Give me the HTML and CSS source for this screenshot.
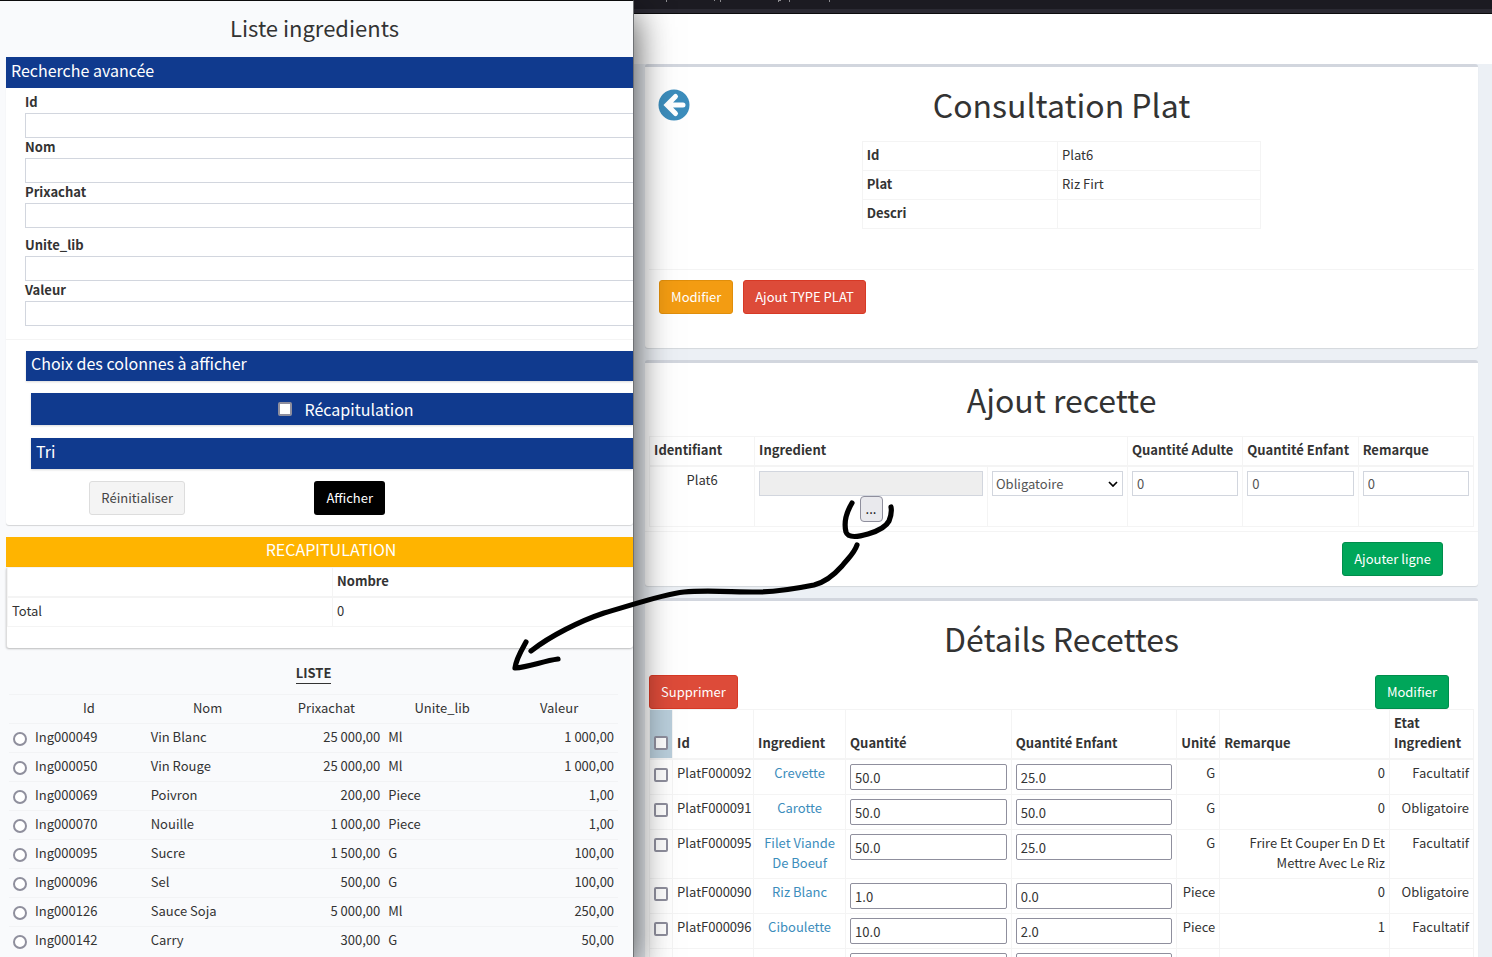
FILE: index.html
```html
<!DOCTYPE html>
<html lang="fr">
<head>
<meta charset="utf-8">
<title>Consultation Plat</title>
<link rel="stylesheet" href="styles.css">
</head>
<body>
<div class="desktop">
  <aside class="popup">
    <h2 class="popup-title">Liste ingredients</h2>
    <form class="search-box">
      <h3 class="bar">Recherche avancée</h3>
      <div class="search-fields">
        <label for="f-id">Id</label><input id="f-id" class="field" type="text">
        <label for="f-nom">Nom</label><input id="f-nom" class="field" type="text">
        <label for="f-prix">Prixachat</label><input id="f-prix" class="field" type="text">
        <label class="spaced" for="f-unite">Unite_lib</label><input id="f-unite" class="field" type="text">
        <label for="f-valeur">Valeur</label><input id="f-valeur" class="field" type="text">
      </div>
      <div class="search-options">
        <h3 class="bar bar-slim bar-shadow">Choix des colonnes à afficher</h3>
        <div class="sub-options">
          <div class="bar bar-recap bar-shadow"><input id="recap" type="checkbox" class="tick"><label for="recap">Récapitulation</label></div>
          <h3 class="bar bar-shadow">Tri</h3>
        </div>
        <div class="search-actions">
          <div class="action-cell"><button type="reset" class="btn btn-default">Réinitialiser</button></div>
          <div class="action-cell"><button type="button" class="btn btn-black">Afficher</button></div>
          <div></div>
        </div>
      </div>
    </form>
    <section class="recap-box">
      <h3 class="bar bar-slim bar-amber">RECAPITULATION</h3>
      <div class="recap-body">
        <table class="grid recap-table">
          <thead><tr><th></th><th>Nombre</th></tr></thead>
          <tbody><tr><td>Total</td><td>0</td></tr></tbody>
        </table>
      </div>
    </section>
    <section class="liste">
      <h4 class="liste-title"><span>LISTE</span></h4>
      <table class="liste-table">
        <colgroup><col class="c-radio"><col class="c-id"><col class="c-nom"><col class="c-prix"><col class="c-unite"><col class="c-valeur"></colgroup>
        <thead><tr><th></th><th>Id</th><th>Nom</th><th>Prixachat</th><th>Unite_lib</th><th>Valeur</th></tr></thead>
        <tbody>
          <tr><td><input type="radio" name="ing" aria-label="Ing000049"></td><td>Ing000049</td><td>Vin Blanc</td><td class="num">25 000,00</td><td>Ml</td><td class="num">1 000,00</td></tr>
          <tr><td><input type="radio" name="ing" aria-label="Ing000050"></td><td>Ing000050</td><td>Vin Rouge</td><td class="num">25 000,00</td><td>Ml</td><td class="num">1 000,00</td></tr>
          <tr><td><input type="radio" name="ing" aria-label="Ing000069"></td><td>Ing000069</td><td>Poivron</td><td class="num">200,00</td><td>Piece</td><td class="num">1,00</td></tr>
          <tr><td><input type="radio" name="ing" aria-label="Ing000070"></td><td>Ing000070</td><td>Nouille</td><td class="num">1 000,00</td><td>Piece</td><td class="num">1,00</td></tr>
          <tr><td><input type="radio" name="ing" aria-label="Ing000095"></td><td>Ing000095</td><td>Sucre</td><td class="num">1 500,00</td><td>G</td><td class="num">100,00</td></tr>
          <tr><td><input type="radio" name="ing" aria-label="Ing000096"></td><td>Ing000096</td><td>Sel</td><td class="num">500,00</td><td>G</td><td class="num">100,00</td></tr>
          <tr><td><input type="radio" name="ing" aria-label="Ing000126"></td><td>Ing000126</td><td>Sauce Soja</td><td class="num">5 000,00</td><td>Ml</td><td class="num">250,00</td></tr>
          <tr><td><input type="radio" name="ing" aria-label="Ing000142"></td><td>Ing000142</td><td>Carry</td><td class="num">300,00</td><td>G</td><td class="num">50,00</td></tr>
        </tbody>
      </table>
    </section>
  </aside>

  <div class="main-window">
    <div class="browser-bar">
      <svg width="240" height="3" viewBox="0 0 240 3" fill="#8b8b8f" aria-hidden="true"><path d="M32 0h1v2h-1zM80 0h1v1h-1zM86 0h1v2h-1zM144 0h3v1h-2v1h-1zM155 0h1v2h-1zM195 0h1v2h-1z"/></svg>
    </div>
    <header class="top-nav"></header>
    <main class="content">
      <section class="card">
        <div class="card-head">
          <a class="back" href="#" aria-label="Retour">
            <svg viewBox="0 0 32 32" aria-hidden="true"><circle cx="16" cy="16" r="15.5" fill="#3c8dbc"/><path d="M17.5 7.5 L9 16 L17.5 24.500 M9.500 16 H25" fill="none" stroke="#fff" stroke-width="5" stroke-linecap="round" stroke-linejoin="miter"/></svg>
          </a>
          <h1>Consultation Plat</h1>
        </div>
        <table class="grid plat-table">
          <tbody>
            <tr><th scope="row">Id</th><td>Plat6</td></tr>
            <tr><th scope="row">Plat</th><td>Riz Firt</td></tr>
            <tr><th scope="row">Descri</th><td></td></tr>
          </tbody>
        </table>
        <div class="card-actions">
          <button type="button" class="btn btn-warning">Modifier</button>
          <button type="button" class="btn btn-danger">Ajout TYPE PLAT</button>
        </div>
      </section>

      <form class="card card-add">
        <h1>Ajout recette</h1>
        <div class="table-wrap">
          <table class="grid add-table">
            <colgroup><col class="a-id"><col class="a-ing"><col class="a-etat"><col class="a-qte"><col class="a-qte"><col class="a-qte"></colgroup>
            <thead><tr><th>Identifiant</th><th colspan="2">Ingredient</th><th>Quantité Adulte</th><th>Quantité Enfant</th><th>Remarque</th></tr></thead>
            <tbody><tr>
              <td class="center">Plat6</td>
              <td class="center"><input class="field" type="text" aria-label="Ingredient" readonly><button type="button" class="picker">...</button></td>
              <td><select class="field" aria-label="Etat"><option>Obligatoire</option><option>Facultatif</option></select></td>
              <td><input class="field" type="text" value="0" aria-label="Quantité Adulte"></td>
              <td><input class="field" type="text" value="0" aria-label="Quantité Enfant"></td>
              <td><input class="field" type="text" value="0" aria-label="Remarque"></td>
            </tr></tbody>
          </table>
        </div>
        <div class="add-actions"><button type="button" class="btn btn-success">Ajouter ligne</button></div>
      </form>

      <form class="card">
        <h1>Détails Recettes</h1>
        <div class="table-wrap">
          <div class="detail-actions">
            <button type="button" class="btn btn-danger">Supprimer</button>
            <button type="button" class="btn btn-success">Modifier</button>
          </div>
          <table class="grid detail-table">
            <colgroup><col class="d-tick"><col class="d-id"><col class="d-ing"><col class="d-qte"><col class="d-qte"><col class="d-unite"><col class="d-rem"><col class="d-etat"></colgroup>
            <thead><tr><th class="all"><input type="checkbox" class="tick" aria-label="Tout"></th><th>Id</th><th>Ingredient</th><th>Quantité</th><th>Quantité Enfant</th><th>Unité</th><th>Remarque</th><th>Etat Ingredient</th></tr></thead>
            <tbody>
              <tr><td><input type="checkbox" class="tick" aria-label="PlatF000092"></td><td>PlatF000092</td><td class="center"><a href="#">Crevette</a></td><td><input class="qty" type="text" value="50.0" aria-label="Quantité"></td><td><input class="qty" type="text" value="25.0" aria-label="Quantité Enfant"></td><td class="num">G</td><td class="num">0</td><td class="num">Facultatif</td></tr>
              <tr><td><input type="checkbox" class="tick" aria-label="PlatF000091"></td><td>PlatF000091</td><td class="center"><a href="#">Carotte</a></td><td><input class="qty" type="text" value="50.0" aria-label="Quantité"></td><td><input class="qty" type="text" value="50.0" aria-label="Quantité Enfant"></td><td class="num">G</td><td class="num">0</td><td class="num">Obligatoire</td></tr>
              <tr><td><input type="checkbox" class="tick" aria-label="PlatF000095"></td><td>PlatF000095</td><td class="center"><a href="#">Filet Viande De Boeuf</a></td><td><input class="qty" type="text" value="50.0" aria-label="Quantité"></td><td><input class="qty" type="text" value="25.0" aria-label="Quantité Enfant"></td><td class="num">G</td><td class="num">Frire Et Couper En D Et Mettre Avec Le Riz</td><td class="num">Facultatif</td></tr>
              <tr><td><input type="checkbox" class="tick" aria-label="PlatF000090"></td><td>PlatF000090</td><td class="center"><a href="#">Riz Blanc</a></td><td><input class="qty" type="text" value="1.0" aria-label="Quantité"></td><td><input class="qty" type="text" value="0.0" aria-label="Quantité Enfant"></td><td class="num">Piece</td><td class="num">0</td><td class="num">Obligatoire</td></tr>
              <tr><td><input type="checkbox" class="tick" aria-label="PlatF000096"></td><td>PlatF000096</td><td class="center"><a href="#">Ciboulette</a></td><td><input class="qty" type="text" value="10.0" aria-label="Quantité"></td><td><input class="qty" type="text" value="2.0" aria-label="Quantité Enfant"></td><td class="num">Piece</td><td class="num">1</td><td class="num">Facultatif</td></tr>
              <tr><td></td><td></td><td></td><td><input class="qty" type="text" aria-label="Quantité"></td><td><input class="qty" type="text" aria-label="Quantité Enfant"></td><td></td><td></td><td></td></tr>
            </tbody>
          </table>
        </div>
      </form>
    </main>
  </div>

  <svg class="annotation" width="400" height="190" viewBox="505 490 400 190" fill="none" stroke="#000" stroke-width="5.2" stroke-linecap="round" stroke-linejoin="round" aria-hidden="true">
    <path d="M852 503 C846 513 844 524 846 532 C848 538 858 537 868 534 C878 531 886 527 889 521 C891 516 892 512 891 507"/>
    <path d="M857 545 C854 554 848 558 842 566 C834 575 826 582 814 585 C794 589 777 592 757 592 C732 592 705 590 684 592 C664 594 632 605 604 613 C580 621 550 636 531 651"/>
    <path d="M526 642 C521 651 516 659 515 668 C529 667 543 661 558 659"/>
  </svg>
</div>
</body>
</html>
```
FILE: styles.css
```css
*, *::before, *::after { box-sizing: border-box; }

body {
  margin: 0;
  font: 13px/20px "Noto Sans CJK JP", "Source Sans Pro", "Noto Sans", sans-serif;
  color: #333;
}

h1, h2, h3, h4 { margin: 0; font-weight: 400; }
input, select, button { font: inherit; color: inherit; margin: 0; }
table { border-collapse: collapse; width: 100%; table-layout: fixed; }
th { text-align: left; font-weight: 700; }
a { color: #3c8dbc; text-decoration: none; }

.desktop {
  position: relative;
  display: flex;
  height: 100vh;
  overflow: hidden;
  background: #ecf0f5;
}

/* Left window */
.popup {
  position: relative;
  z-index: 1;
  flex: 0 0 42.5%;
  overflow: hidden;
  background: #f9fafc;
  border-top: 1px solid #0c0c0d;
  border-right: 1px solid #6f7174;
  box-shadow: 0 14px 36px rgba(0, 0, 0, .75);
  padding-left: 6px;
}
.popup-title { padding: 14px 10px 18px 0; font-size: 22px; line-height: 24px; text-align: center; }

.bar {
  background: #103a8e;
  color: #fff;
  padding: 1px 5px 6px;
  font-size: 16px;
  line-height: 24px;
}
.bar-slim { padding-top: 0; }
.bar-shadow { box-shadow: 0 1px 2px rgba(0, 0, 0, .15); }
.search-box {
  background: #fff;
  border-radius: 3px;
  box-shadow: 0 1px 1px rgba(0, 0, 0, .15);
}
.search-fields {
  display: flex;
  flex-direction: column;
  padding: 5px 0 13px 19px;
  border-bottom: 1px solid #f4f4f4;
}
.search-fields label { font-weight: 700; line-height: 18px; padding-bottom: 2px; }
.search-fields .spaced { margin-top: 8px; }

.field {
  display: block;
  width: 100%;
  height: 25px;
  padding: 0 4px;
  border: 1px solid #d2d6de;
  border-radius: 0;
  background: #fff;
  color: #555;
}
.field[readonly] { background: #eee; }
.search-fields .field { width: auto; margin-right: -8px; }
select.field {
  appearance: none;
  padding-left: 3px;
  background: #fff url("data:image/svg+xml,%3Csvg xmlns='http://www.w3.org/2000/svg' width='10' height='6'%3E%3Cpath d='M1 1l4 4 4-4' fill='none' stroke='black' stroke-width='1.7'/%3E%3C/svg%3E") no-repeat right 4px center;
}

.search-options { padding: 11px 0 10px 20px; }
.sub-options { display: flex; flex-direction: column; gap: 13px; padding: 12px 0 12px 5px; }
.bar-recap { display: flex; align-items: center; justify-content: center; gap: 12px; height: 32px; padding: 0 0 0 28px; }

.tick {
  appearance: none;
  display: block;
  width: 14px;
  height: 14px;
  border: 2px solid #8f8f9d;
  border-radius: 2px;
  background: #fff;
}
.search-actions { display: grid; grid-template-columns: 35% 35% 30%; }
.action-cell { display: flex; justify-content: center; padding-left: 10px; }

.btn {
  height: 34px;
  padding: 0 11px 1px;
  border: 1px solid transparent;
  border-radius: 3px;
  color: #fff;
}
.btn-default { background: #f4f4f4; border-color: #ddd; color: #444; }
.btn-black { background: #000; }
.btn-warning { background: #f39c12; border-color: #e08e0b; }
.btn-danger { background: #dd4b39; border-color: #d73925; }
.btn-success { background: #00a65a; border-color: #008d4c; }

.recap-box { margin-top: 12px; }
.bar-amber { background: #ffb400; text-align: center; padding-left: 28px; }
.recap-body {
  background: #fff;
  padding-bottom: 21px;
  border-left: 1px solid #ddd;
  border-radius: 3px;
  box-shadow: 0 1px 2px rgba(0, 0, 0, .25);
}

.grid th, .grid td { border: 1px solid #f4f4f4; padding: 3px 4px 5px; vertical-align: top; }
.grid td:has(.field, .qty) { padding: 4px; }
.grid thead th { border-bottom-width: 2px; vertical-align: bottom; }
.recap-table { width: 104%; }

.liste { padding: 15px 15px 0 3px; }
.liste-title { text-align: center; font-weight: 700; padding-bottom: 10px; }
.liste-title span { display: inline-block; border-bottom: 1px solid #333; }
.liste-table th, .liste-table td { border-top: 1px solid #f2f3f5; padding: 3px 4px 5px; height: 29px; vertical-align: top; }
.liste-table th { font-weight: 400; text-align: center; }
.liste-table input {
  appearance: none;
  display: block;
  width: 14px;
  height: 14px;
  margin-top: 5px;
  border: 2px solid #8f8f9d;
  border-radius: 50%;
  background: #fff;
}
.c-radio { width: 22px; }
.c-id { width: 19%; }
.c-nom { width: 20%; }
.c-prix { width: 19%; }
.c-unite { width: 19%; }
.liste-table .num, .grid .num { text-align: right; }
.grid .center { text-align: center; }

/* Right window */
.main-window { flex: 1; min-width: 0; }
.browser-bar { height: 14px; background: #1c1b22; border-bottom: 1px solid #0c0c0d; box-shadow: inset 0 -4px #2b2a33; }
.browser-bar svg { display: block; }
.top-nav { height: 50px; background: #fff; }
.content { display: flex; flex-direction: column; gap: 12px; padding: 0 14px 0 11px; }
.card {
  background: #fff;
  border-top: 3px solid #d2d6de;
  border-radius: 3px;
  box-shadow: 0 1px 1px rgba(0, 0, 0, .1);
}
.card h1 { font-size: 32px; line-height: 40px; padding: 17px 0; text-align: center; }
.card-add h1 { padding-top: 16px; }
.card-head { position: relative; }
.back { position: absolute; left: 13px; top: 22px; width: 32px; height: 32px; }
.back svg { display: block; width: 32px; height: 32px; }
.plat-table { width: 48%; margin: 0 auto; }
.plat-table th { width: 49%; }
.grid tbody tr { height: 29px; }
.card-actions {
  display: flex;
  gap: 10px;
  margin: 40px 4px 0;
  padding: 10px 10px 34px;
  border-top: 1px solid #f4f4f4;
}
.table-wrap { padding: 0 4px; }
.a-id { width: 105px; }
.a-etat { width: 140px; }
.a-qte { width: 14%; }
.picker {
  display: block;
  width: 23px;
  height: 26px;
  margin: 0 auto;
  padding: 0;
  border: 1px solid #8f8f9d;
  border-radius: 4px;
  background: #e9e9ed;
  color: #000;
}
.add-actions { display: flex; justify-content: flex-end; margin-top: 4px; padding: 10px 35px; border-top: 1px solid #f4f4f4; }

.detail-actions { display: flex; justify-content: space-between; padding-right: 25px; }
.detail-table .all { background: #b9cedb; }
.detail-table td .tick { margin-top: 5px; }
.detail-table .all .tick { margin-bottom: 3px; }
.d-tick { width: 23px; }
.d-id { width: 81px; }
.d-ing { width: 92px; }
.d-qte { width: 20.1%; }
.d-unite { width: 43px; }
.d-etat { width: 84px; }
.qty {
  display: block;
  width: 100%;
  height: 26px;
  padding: 0 4px;
  border: 1px solid #8f8f9d;
  border-radius: 2px;
  background: #fff;
}

.annotation { position: absolute; left: 505px; top: 490px; z-index: 2; pointer-events: none; }
```
